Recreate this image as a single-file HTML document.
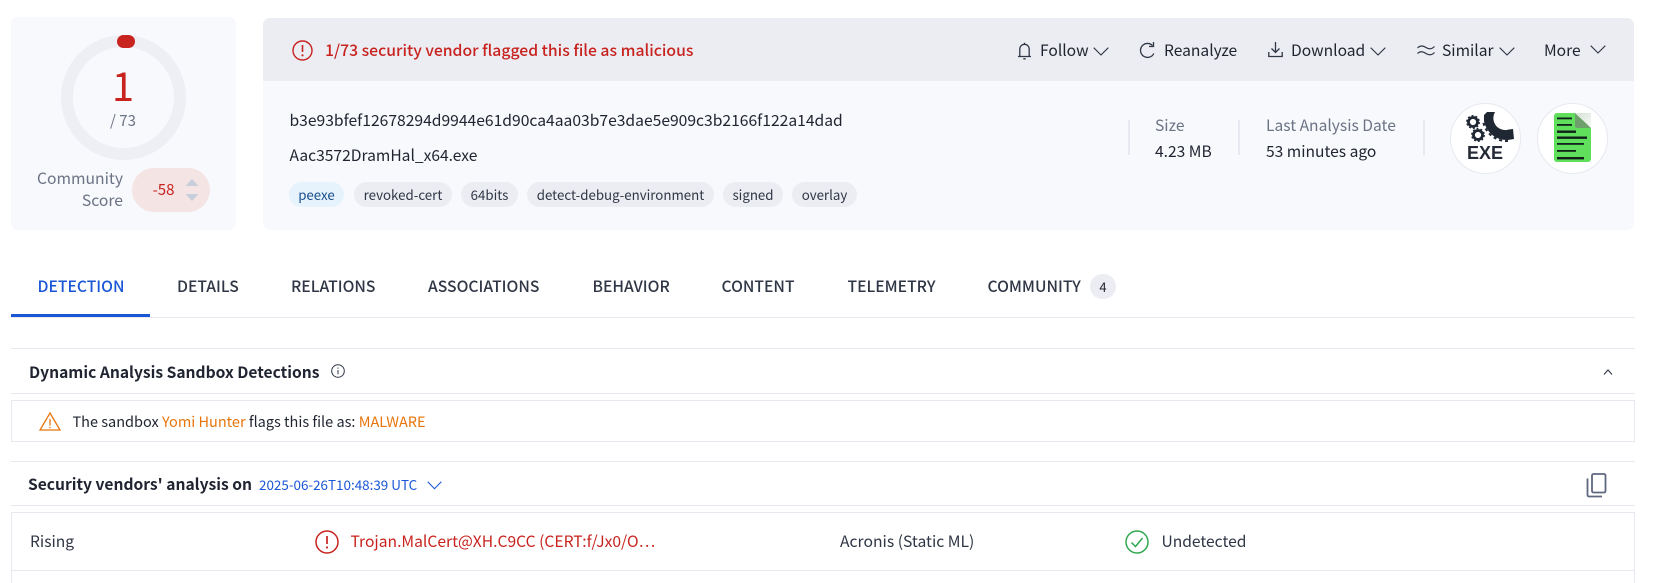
<!DOCTYPE html>
<html><head><meta charset="utf-8">
<style>
html,body{margin:0;padding:0;background:#fff;width:1674px;height:583px;overflow:hidden}
body{position:relative;font-family:"Noto Sans CJK JP","Liberation Sans",sans-serif;color:#1f2430;font-size:15px}
.t{position:absolute;white-space:nowrap;line-height:20px;height:20px}
.b{position:absolute}
.ln{position:absolute;left:11px;width:1624px;height:1px;background:#e6e9f0}
.tag{position:absolute;top:183px;height:24px;line-height:23px;border-radius:13px;font-size:13.3px;text-align:center;color:#2f3645}
.tabbg{position:absolute;top:182px;height:25px;border-radius:13px;background:#ecedf3}
.tab{position:absolute;top:276px;line-height:20px;font-size:15.7px;font-weight:500;color:#2f3645;white-space:nowrap}
svg{position:absolute;overflow:visible}
.g{color:#6b7385}
</style></head><body>

<div class="b" style="left:11px;top:17px;width:225px;height:213px;background:#f8f9fc;border-radius:7px"></div>
<svg style="left:61px;top:35px" width="125" height="125" viewBox="0 0 125 125"><circle cx="62.5" cy="62.5" r="56.5" fill="none" stroke="#eeeff4" stroke-width="12"/><rect x="56" y="0" width="18" height="13" rx="6.5" fill="#c8231f"/></svg>
<div class="t" style="left:93px;top:59px;width:60px;height:50px;line-height:50px;text-align:center;font-size:40px;color:#c8231f">1</div>
<div class="t g" style="left:93px;top:111px;width:60px;text-align:center;font-size:15px">/ 73</div>
<div class="t g" style="left:20px;width:103px;top:168px;text-align:right;font-size:15.7px">Community</div>
<div class="t g" style="left:20px;width:103px;top:190px;text-align:right;font-size:15.7px">Score</div>
<div class="b" style="left:132px;top:168px;width:78px;height:44px;border-radius:22px;background:#f4e4e4"></div>
<div class="t" style="left:146px;width:35px;text-align:center;top:180px;font-size:15px;color:#c8231f">-58</div>
<svg style="left:185px;top:178px" width="14" height="24" viewBox="0 0 14 24"><path d="M7 1L13.5 8H.5z" fill="#c6cfdb"/><path d="M.5 16H13.5L7 23z" fill="#c6cfdb"/></svg>

<div class="b" style="left:263px;top:18px;width:1371px;height:212px;background:#f8f9fc;border-radius:7px"></div>
<div class="b" style="left:263px;top:18px;width:1371px;height:63px;background:#ecedf3;border-radius:7px 7px 0 0"></div>
<svg style="left:292px;top:40px" width="21" height="21" viewBox="0 0 21 21" fill="none" stroke="#c8231f"><circle cx="10.5" cy="10.5" r="9.5" stroke-width="1.4"/><path d="M10.5 5v7" stroke-width="1.6"/><circle cx="10.5" cy="15.3" r=".6" stroke-width="1"/></svg>
<div class="t" style="left:325px;top:40px;font-size:15.75px;font-weight:500;color:#c8231f">1/73 security vendor flagged this file as malicious</div>

<svg style="left:1017px;top:42px" width="15" height="18" viewBox="0 0 15 18" fill="none" stroke="#2f3645" stroke-width="1.3"><path d="M1 14.5h13M2.8 14.5V7a4.7 4.7 0 0 1 9.4 0v7.5"/><path d="M7.5 2.2V.8M6.3 16.8h2.4"/></svg>
<div class="t" style="left:1040px;top:40px;font-size:15.6px">Follow</div>
<svg style="left:1093px;top:47px" width="16" height="9" viewBox="0 0 16 9" fill="none" stroke="#2f3645" stroke-width="1.1"><path d="M.7.7L8 8l7.3-7.3"/></svg>
<svg style="left:1139px;top:41px" width="17" height="18" viewBox="0 0 17 18" fill="none" stroke="#2f3645" stroke-width="1.3"><path d="M14.8 12.5A7 7 0 1 1 13.5 4.5"/><path d="M14.5 1v4.5H10"/></svg>
<div class="t" style="left:1164px;top:40px;font-size:15.6px">Reanalyze</div>
<svg style="left:1268px;top:41px" width="15" height="18" viewBox="0 0 15 18" fill="none" stroke="#2f3645" stroke-width="1.3"><path d="M7.5 1v10M3.5 7.5l4 4 4-4"/><path d="M.8 11v4.5h13.4V11"/></svg>
<div class="t" style="left:1291px;top:40px;font-size:15.6px">Download</div>
<svg style="left:1370px;top:47px" width="16" height="9" viewBox="0 0 16 9" fill="none" stroke="#2f3645" stroke-width="1.1"><path d="M.7.7L8 8l7.3-7.3"/></svg>
<svg style="left:1417px;top:44px" width="18" height="12" viewBox="0 0 18 12" fill="none" stroke="#2f3645" stroke-width="1.2"><path d="M.5 4C3 1.5 6 1.5 9 3.500S15 5 17.500 2.500M.5 9.500C3 7 6 7.500 9 9.500S15 11 17.500 8.500"/></svg>
<div class="t" style="left:1442px;top:40px;font-size:15.6px">Similar</div>
<svg style="left:1499px;top:47px" width="16" height="9" viewBox="0 0 16 9" fill="none" stroke="#2f3645" stroke-width="1.1"><path d="M.7.7L8 8l7.3-7.3"/></svg>
<div class="t" style="left:1544px;top:40px;font-size:15.6px">More</div>
<svg style="left:1590px;top:45px" width="16" height="9" viewBox="0 0 16 9" fill="none" stroke="#2f3645" stroke-width="1.1"><path d="M.7.7L8 8l7.3-7.3"/></svg>

<div class="t" style="left:289.5px;top:110px;font-size:15.67px">b3e93bfef12678294d9944e61d90ca4aa03b7e3dae5e909c3b2166f122a14dad</div>
<div class="t" style="left:289.5px;top:145px;font-size:15.6px">Aac3572DramHal_x64.exe</div>
<div class="tabbg" style="left:289px;width:55px;background:#e6f3fc"></div>
<div class="tabbg" style="left:354px;width:98px"></div>
<div class="tabbg" style="left:461px;width:57px"></div>
<div class="tabbg" style="left:527px;width:187px"></div>
<div class="tabbg" style="left:723px;width:60px"></div>
<div class="tabbg" style="left:792px;width:65px"></div>
<div class="tag" style="left:289px;width:55px;color:#1a4f8f">peexe</div>
<div class="tag" style="left:354px;width:98px">revoked-cert</div>
<div class="tag" style="left:461px;width:57px">64bits</div>
<div class="tag" style="left:527px;width:187px">detect-debug-environment</div>
<div class="tag" style="left:723px;width:60px">signed</div>
<div class="tag" style="left:792px;width:65px">overlay</div>

<div class="b" style="left:1128px;top:120px;width:2px;height:35px;background:#e6e9f0"></div>
<div class="b" style="left:1238px;top:120px;width:2px;height:35px;background:#e6e9f0"></div>
<div class="b" style="left:1423px;top:120px;width:2px;height:35px;background:#e6e9f0"></div>
<div class="t g" style="left:1155px;top:115px;font-size:15.6px">Size</div>
<div class="t" style="left:1155px;top:141px;font-size:15.6px">4.23 MB</div>
<div class="t g" style="left:1266px;top:115px;font-size:15.6px">Last Analysis Date</div>
<div class="t" style="left:1266px;top:141px;font-size:15.6px">53 minutes ago</div>

<div class="b" style="left:1450px;top:103px;width:69px;height:69px;border-radius:50%;background:#fff;border:1px solid #e6e9f0"></div>
<svg style="left:1450px;top:103px" width="71" height="71" viewBox="0 0 71 71"><g fill="none" stroke="#1f2733"><circle cx="23" cy="19" r="4.500" stroke-width="2.800"/><circle cx="28" cy="32" r="4.500" stroke-width="2.800"/><circle cx="23" cy="19" r="6.300" stroke-width="1.300" stroke-dasharray="2 2"/><circle cx="28" cy="32" r="6.300" stroke-width="1.300" stroke-dasharray="2 2"/></g><path d="M37 9L45 9A12 12 0 0 0 59 26.500L63 26 64 36 58 37A23 23 0 0 1 34 18L34 12Z" fill="#1f2733"/><path d="M58 38A24 24 0 0 1 33 18" fill="none" stroke="#1f2733" stroke-width="2" stroke-dasharray="3 3"/></svg>
<div class="t" style="left:1450px;top:142px;width:70px;text-align:center;font-family:'Liberation Sans',sans-serif;font-weight:700;font-size:18px;height:22px;line-height:22px;color:#252b36">EXE</div>

<div class="b" style="left:1537px;top:103px;width:69px;height:69px;border-radius:50%;background:#fff;border:1px solid #e6e9f0"></div>
<svg style="left:1537px;top:103px" width="71" height="71" viewBox="0 0 71 71"><defs><linearGradient id="f" x1="0" y1="0" x2="1" y2="1"><stop offset="0" stop-color="#d5e2d4"/><stop offset="1" stop-color="#f6f8f6"/></linearGradient></defs><path d="M17 13a3 3 0 0 1 3-3h18l16 15v31a3 3 0 0 1-3 3H20a3 3 0 0 1-3-3z" fill="#5fdf5b"/><path d="M38 10l16 15H40a2 2 0 0 1-2-2z" fill="#6f9f6b"/><path d="M39 10l15 15V10z" fill="url(#f)"/><g fill="#10221a"><rect x="20" y="14.500" width="15" height="1.800"/><rect x="20" y="21" width="15" height="1.800"/><rect x="20" y="27.500" width="19" height="2.400"/><rect x="20" y="33.500" width="30" height="2.400"/><rect x="20" y="40" width="27" height="1.800"/><rect x="20" y="47" width="19" height="1.800"/><rect x="20" y="54" width="27" height="2.400"/></g></svg>

<div class="tab" style="left:37.5px;color:#1a56d6">DETECTION</div>
<div class="tab" style="left:177px">DETAILS</div>
<div class="tab" style="left:291px">RELATIONS</div>
<div class="tab" style="left:428px">ASSOCIATIONS</div>
<div class="tab" style="left:592.5px">BEHAVIOR</div>
<div class="tab" style="left:721.5px">CONTENT</div>
<div class="tab" style="left:847.5px">TELEMETRY</div>
<div class="tab" style="left:987.5px">COMMUNITY</div>
<div class="b" style="left:1090px;top:274px;width:26px;height:25px;border-radius:13px;background:#ecedf3;text-align:center;font-size:13px;line-height:25px">4</div>
<div class="ln" style="top:317px;height:1px"></div>
<div class="b" style="left:11px;top:314px;width:139px;height:3px;background:#1a56d6"></div>

<div class="ln" style="top:348px"></div>
<div class="t" style="left:29px;top:362px;font-size:15.6px;font-weight:700">Dynamic Analysis Sandbox Detections</div>
<svg style="left:331px;top:364px" width="14" height="14" viewBox="0 0 14 14" fill="none" stroke="#2f3645"><circle cx="7" cy="7" r="6.3"/><path d="M7 6v4.3M7 3.500v1.200"/></svg>
<svg style="left:1603px;top:369px" width="10" height="6" viewBox="0 0 10 6" fill="none" stroke="#2f3645" stroke-width="1.1"><path d="M1 5.500L5 1l4 4.500"/></svg>
<div class="ln" style="top:393px"></div>
<div class="b" style="left:11px;top:400px;width:1622px;height:40px;border:1px solid #e6e9f0"></div>
<svg style="left:39px;top:412px" width="22" height="19" viewBox="0 0 22 19" fill="none" stroke="#e8750c" stroke-width="1.3"><path d="M11 1L21 18H1z"/><path d="M11 7v6.500M11 15v1.300"/></svg>
<div class="t" style="left:72.5px;top:412px;font-size:14.5px">The sandbox <span style="color:#e8750c">Yomi Hunter</span> flags this file as: <span style="color:#e8750c">MALWARE</span></div>

<div class="ln" style="top:461px"></div>
<div class="t" style="left:28px;top:474px;font-size:15.6px;font-weight:700">Security vendors' analysis on</div>
<div class="t" style="left:259px;top:474px;font-size:13.45px;color:#1a56d6">2025-06-26T10:48:39 UTC</div>
<svg style="left:427px;top:481px" width="15" height="9" viewBox="0 0 15 9" fill="none" stroke="#1a56d6" stroke-width="1.1"><path d="M.7.7l6.800 7 6.800-7"/></svg>
<svg style="left:1586px;top:473px" width="21" height="25" viewBox="0 0 21 25" fill="none" stroke="#5f6780" stroke-width="1.8"><rect x="6" y="1" width="13.500" height="18.500" rx="1.500"/><path d="M1.500 5.500V22a1.500 1.500 0 0 0 1.500 1.500h13"/></svg>
<div class="ln" style="top:505px"></div>

<div class="b" style="left:11px;top:512px;width:1622px;height:80px;border:1px solid #e6e9f0"></div>
<div class="ln" style="top:570px"></div>
<div class="t" style="left:30px;top:531px;font-size:15.6px;color:#2f3645">Rising</div>
<svg style="left:315px;top:530px" width="24" height="24" viewBox="0 0 24 24" fill="none" stroke="#c8231f"><circle cx="12" cy="12" r="11" stroke-width="1.5"/><path d="M12 6v8" stroke-width="1.7"/><circle cx="12" cy="17.500" r=".6" stroke-width="1"/></svg>
<div class="t" style="left:350.5px;top:531px;font-size:15.65px;color:#c8231f">Trojan.MalCert@XH.C9CC (CERT:f/Jx0/O…</div>
<div class="t" style="left:840px;top:531px;font-size:15.7px;color:#2f3645">Acronis (Static ML)</div>
<svg style="left:1125px;top:530px" width="24" height="24" viewBox="0 0 24 24" fill="none" stroke="#2fa84f"><circle cx="12" cy="12" r="11" stroke-width="1.5"/><path d="M6.500 12.500l4 4 7-8.500" stroke-width="1.5"/></svg>
<div class="t" style="left:1161.5px;top:531px;font-size:15.6px;color:#2f3645">Undetected</div>
</body></html>
